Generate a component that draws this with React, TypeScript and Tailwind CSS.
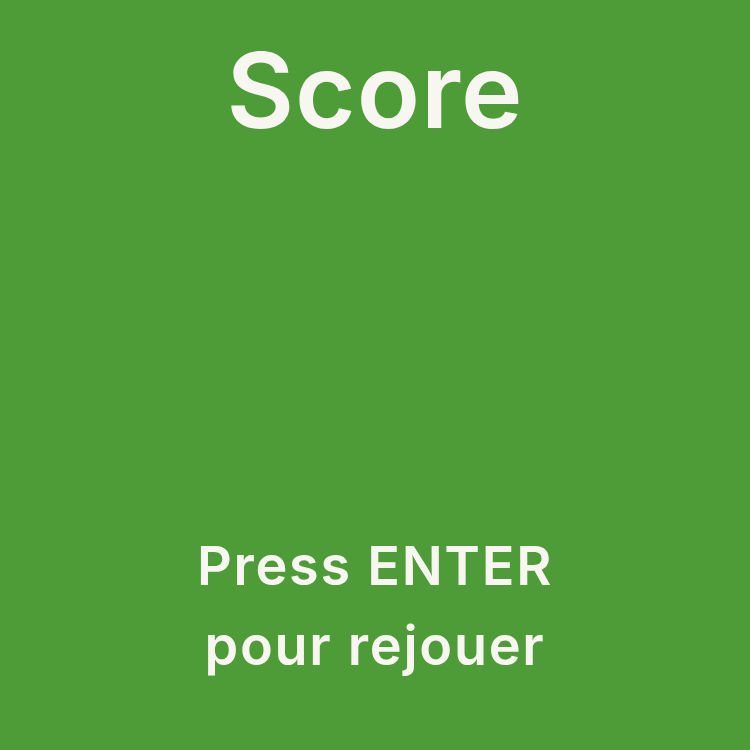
export default function App() {
  return (
    <div className="w-[750px] h-[750px] bg-[#4e9c38] flex flex-col items-center text-[#f8f6f0]" style={{ fontFamily: "Inter, sans-serif" }}>
      <div className="mt-[30px] text-[104px] leading-[120px] font-semibold tracking-[0.01em]">Score</div>
      <div className="mt-auto mb-[64px] text-[54px] leading-[80px] font-semibold text-center tracking-[0.032em]">
        <div>Press ENTER</div>
        <div>pour rejouer</div>
      </div>
    </div>
  );
}
